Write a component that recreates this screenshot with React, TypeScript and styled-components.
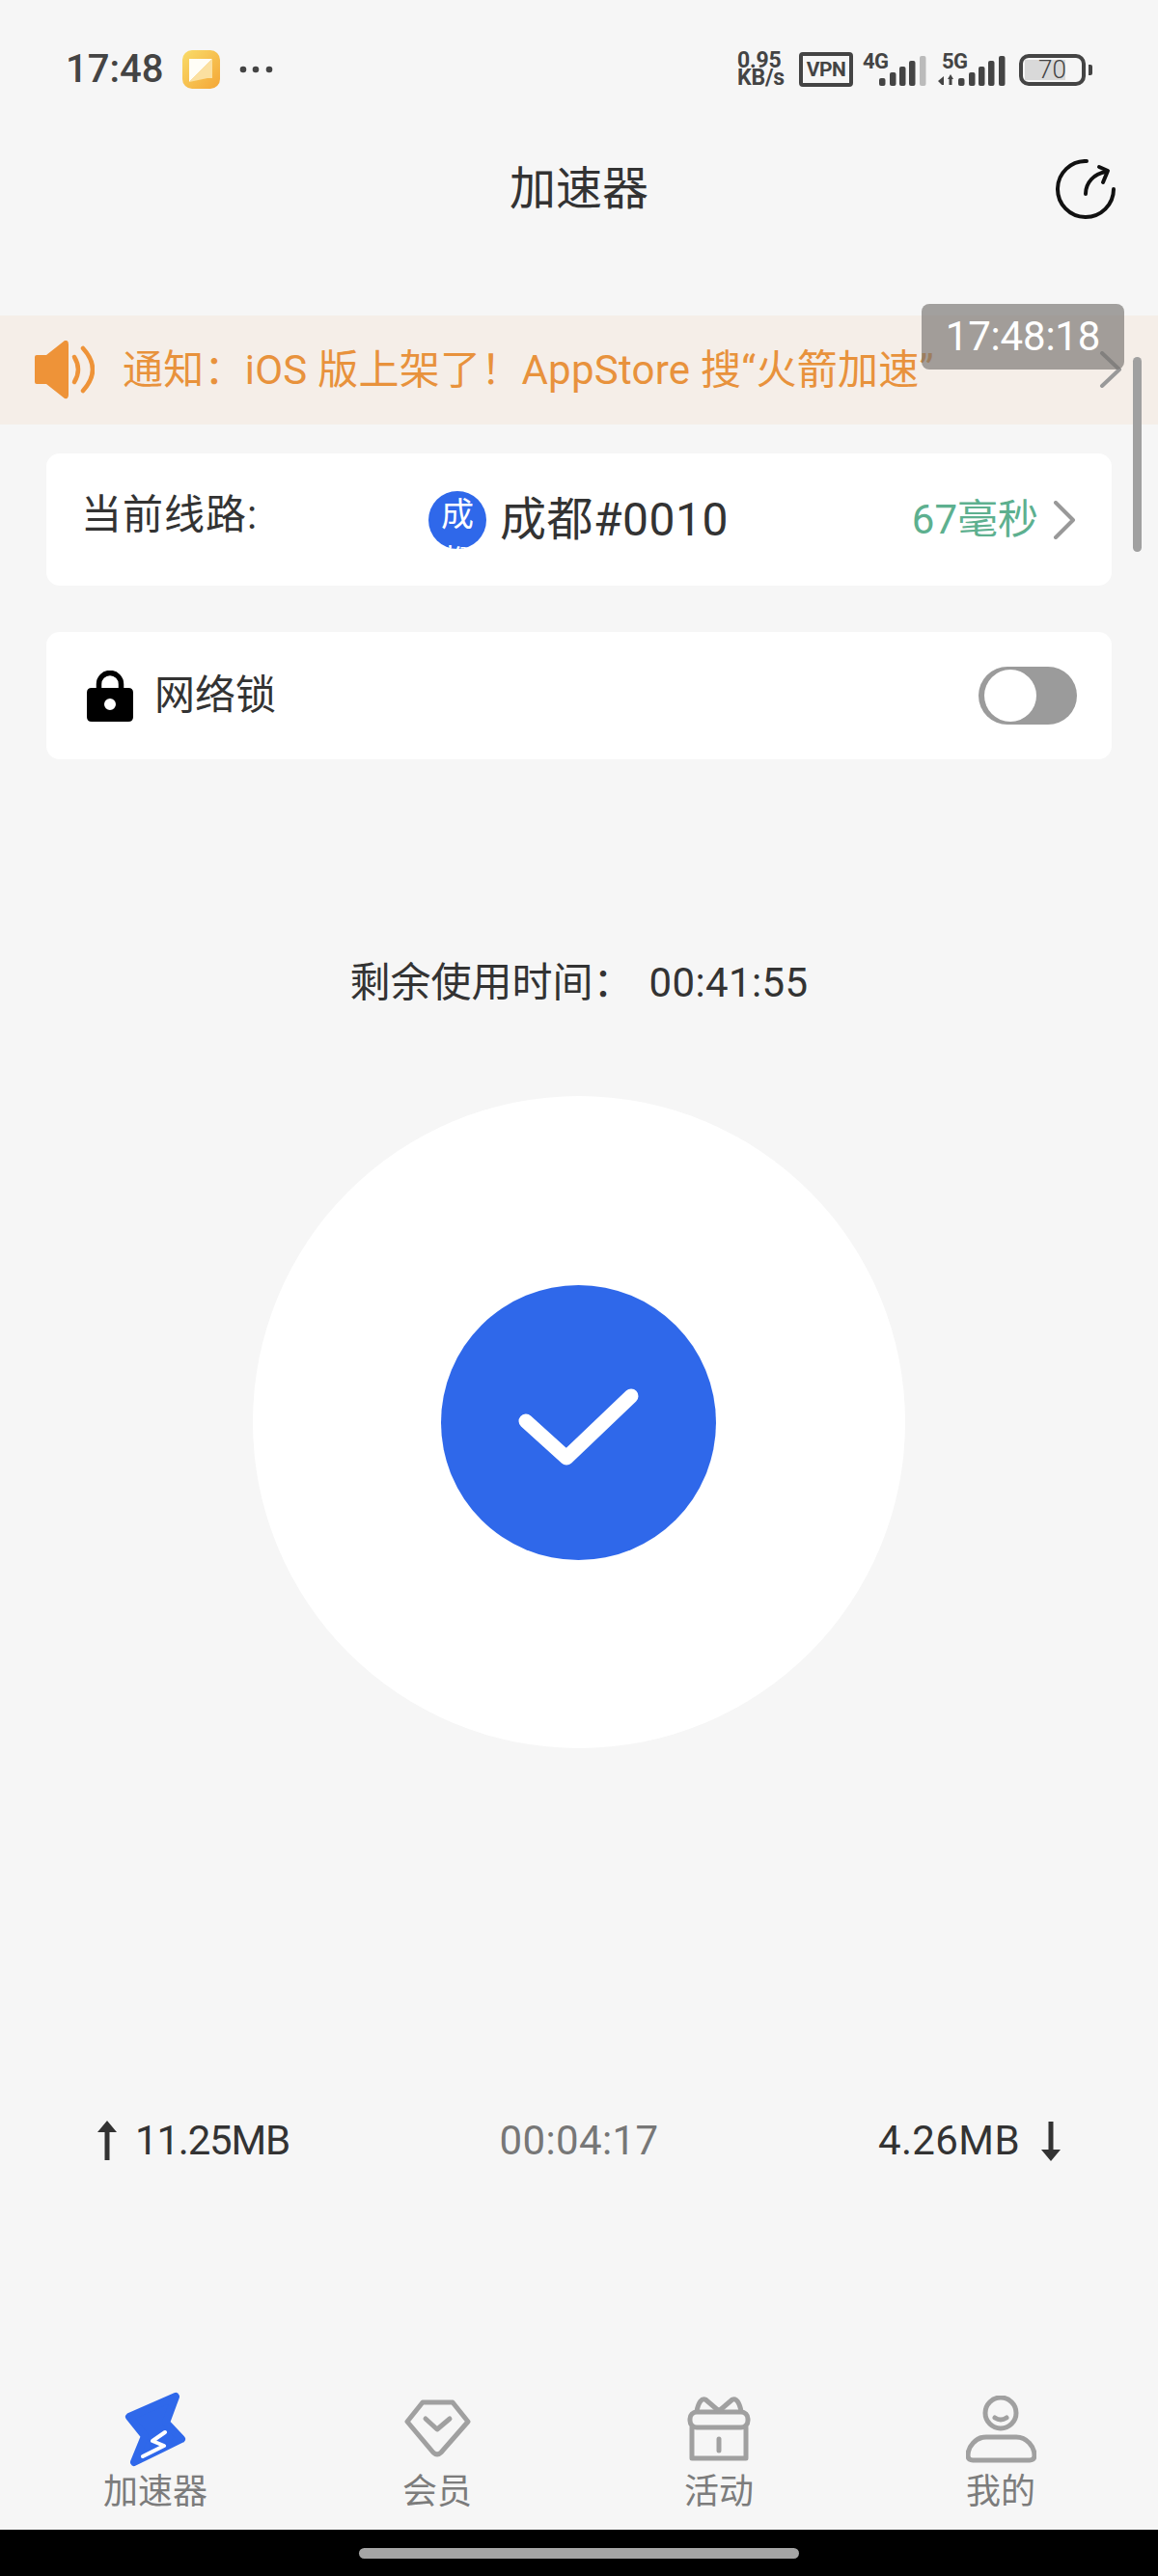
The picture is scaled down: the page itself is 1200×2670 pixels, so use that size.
import React from "react";
import styled, { createGlobalStyle } from "styled-components";

const Global = createGlobalStyle`
  html, body { margin: 0; padding: 0; background: #f6f6f6; }
  * { box-sizing: border-box; }
`;

const FONT = `Roboto, "Noto Sans CJK SC", sans-serif`;

const Page = styled.div`
  position: relative;
  width: 1200px;
  height: 2670px;
  overflow: hidden;
  display: flex;
  flex-direction: column;
  background: #f6f6f6;
  color: #333;
  font-family: ${FONT};
`;

const StatusBar = styled.div`
  height: 144px;
  display: flex;
  align-items: center;
  justify-content: space-between;
  padding: 0 68px;
  color: #444;
`;
const StatusLeft = styled.div`
  display: flex;
  align-items: center;
`;
const Clock = styled.span`
  font-size: 40px;
  font-weight: 500;
  line-height: 44px;
  width: 121px;
`;
const AppIcon = styled.svg`
  display: block;
  width: 40px;
  height: 40px;
  margin-right: 19px;
`;
const Dots = styled.svg`
  display: block;
  width: 36px;
  height: 8px;
`;
const StatusRight = styled.div`
  display: flex;
  align-items: center;
  margin-right: -4px;
  margin-left: auto;
  transform: translateX(-4px);
`;
const Speed = styled.div`
  width: 64px;
  font-size: 23px;
  font-weight: 700;
  line-height: 18px;
  letter-spacing: -0.2px;
  color: #444;
  display: flex;
  flex-direction: column;
`;
const VpnBox = styled.div`
  width: 56px;
  height: 36px;
  border: 4px solid #444;
  border-radius: 4px;
  display: flex;
  align-items: center;
  justify-content: center;
  font-size: 21px;
  font-weight: 700;
  letter-spacing: -0.5px;
  margin-right: 10px;
`;
const Signal = styled.div<{ $w: number }>`
  position: relative;
  width: ${(p) => p.$w}px;
  height: 36px;
`;
const SignalLabel = styled.span<{ $left: number }>`
  position: absolute;
  left: ${(p) => p.$left}px;
  top: -1px;
  font-size: 22px;
  font-weight: 700;
  line-height: 22px;
  letter-spacing: -0.5px;
`;
const SignalBars = styled.svg`
  display: block;
  width: 100%;
  height: 36px;
`;
const Battery = styled.div`
  width: 69px;
  height: 33px;
  border: 4px solid #444;
  border-radius: 10px;
  position: relative;
  display: flex;
  align-items: center;
  justify-content: center;
  font-size: 26px;
  font-weight: 300;
  line-height: 26px;
  overflow: hidden;
  &::before {
    content: "";
    position: absolute;
    left: 2px;
    top: 2px;
    bottom: 2px;
    width: 42px;
    background: #d9d9d9;
  }
`;
const BatteryValue = styled.span`
  position: relative;
`;
const BatteryCap = styled.div`
  width: 4px;
  height: 11px;
  margin-left: 3px;
  background: #444;
  border-radius: 0 2px 2px 0;
`;

const Header = styled.header`
  height: 104px;
  margin-bottom: 79px;
  display: grid;
  grid-template-columns: 1fr auto 1fr;
  align-items: center;
  padding: 0 44px;
`;
const Title = styled.h1`
  grid-column: 2;
  margin: 0;
  font-size: 48px;
  font-weight: 400;
  line-height: 64px;
  color: #333;
`;
const RefreshIcon = styled.svg`
  justify-self: end;
  display: block;
  width: 62px;
  height: 62px;
`;

const Notice = styled.div`
  position: relative;
  height: 113px;
  flex: none;
  background: #f5eee8;
  display: flex;
  align-items: center;
  padding-left: 36px;
  color: #e8923c;
`;
const Speaker = styled.svg`
  display: block;
  width: 62px;
  height: 62px;
  margin-right: 29px;
  flex: none;
`;
const NoticeText = styled.span`
  font-size: 42px;
  line-height: 56px;
  letter-spacing: 0.25px;
  white-space: nowrap;
`;
const NoticeChevron = styled.svg`
  position: absolute;
  left: 1139px;
  top: 37px;
  width: 24px;
  height: 38px;
`;
const TimeBadge = styled.div`
  position: absolute;
  left: 955px;
  top: -12px;
  width: 210px;
  height: 68px;
  border-radius: 8px;
  background: rgba(118, 116, 112, 0.66);
  color: #fff;
  font-size: 42px;
  font-weight: 400;
  line-height: 68px;
  letter-spacing: -0.2px;
  text-align: center;
`;

const Card = styled.section<{ $height: number; $top: number }>`
  height: ${(p) => p.$height}px;
  margin: ${(p) => p.$top}px 48px 0;
  flex: none;
  background: #fff;
  border-radius: 14px;
  display: flex;
  align-items: center;
`;
const LineCard = styled(Card)`
  padding: 0 37px 0 36px;
`;
const LineLabel = styled.span`
  width: 360px;
  font-size: 42px;
  line-height: 56px;
  letter-spacing: 1px;
  margin-top: -10px;
  color: #333;
`;
const CityBadge = styled.div`
  width: 60px;
  height: 60px;
  flex: none;
  border-radius: 50%;
  overflow: hidden;
  background: #2f68ea;
  color: #fff;
  font-size: 34px;
  line-height: 49px;
  text-align: center;
  padding: 0 13px;
  word-break: break-all;
  margin-right: 14px;
`;
const LineName = styled.span`
  font-size: 48px;
  line-height: 60px;
  letter-spacing: 0.5px;
  color: #333;
  white-space: nowrap;
`;
const Latency = styled.span`
  margin-left: auto;
  font-size: 42px;
  line-height: 56px;
  color: #5db08f;
  white-space: nowrap;
`;
const RowChevron = styled.svg`
  display: block;
  width: 24px;
  height: 40px;
  margin-left: 15px;
`;
const LockCard = styled(Card)`
  padding: 0 36px 0 42px;
`;
const LockIcon = styled.svg`
  display: block;
  width: 48px;
  height: 53px;
  margin-right: 22px;
`;
const LockLabel = styled.span`
  font-size: 42px;
  line-height: 56px;
  color: #333;
`;
const Toggle = styled.div`
  width: 102px;
  height: 60px;
  margin-left: auto;
  border-radius: 30px;
  background: #9b9b9b;
  padding: 3px 6px;
  &::after {
    content: "";
    display: block;
    width: 54px;
    height: 54px;
    border-radius: 50%;
    background: #fff;
  }
`;

const Remaining = styled.div`
  margin-top: 206px;
  height: 52px;
  flex: none;
  display: flex;
  justify-content: center;
  align-items: center;
  font-size: 42px;
  line-height: 52px;
  color: #333;
  white-space: nowrap;
`;
const RemainingTime = styled.span`
  margin-left: 16px;
  letter-spacing: 0.4px;
`;

const BigCircle = styled.div`
  width: 676px;
  height: 676px;
  flex: none;
  margin: 91px auto 0;
  border-radius: 50%;
  background: #fff;
  display: flex;
  align-items: center;
  justify-content: center;
`;
const ConnectButton = styled.div`
  width: 285px;
  height: 285px;
  margin-right: 2px;
  border-radius: 50%;
  background: #2f68ea;
`;
const CheckIcon = styled.svg`
  display: block;
  width: 285px;
  height: 285px;
`;

const Stats = styled.div`
  margin-top: 377px;
  height: 60px;
  flex: none;
  padding: 0 100px;
  display: grid;
  grid-template-columns: 1fr auto 1fr;
  align-items: center;
`;
const Traffic = styled.div<{ $end?: boolean }>`
  display: flex;
  align-items: center;
  justify-content: ${(p) => (p.$end ? "flex-end" : "flex-start")};
  gap: ${(p) => (p.$end ? "21px" : "18px")};
  font-size: 42px;
  letter-spacing: ${(p) => (p.$end ? "0.4px" : "-1.2px")};
  line-height: 60px;
  color: #333;
`;
const Elapsed = styled.span`
  font-size: 42px;
  letter-spacing: 0.4px;
  line-height: 60px;
  color: #777;
`;
const TrafficArrow = styled.svg`
  display: block;
  width: 22px;
  height: 42px;
`;

const Tabs = styled.nav`
  margin-top: auto;
  flex: none;
  display: grid;
  grid-template-columns: repeat(4, 292px);
  padding: 0 0 19px 15px;
`;
const Tab = styled.div`
  display: flex;
  flex-direction: column;
  align-items: center;
`;
const TabIconSlot = styled.div`
  height: 86px;
  display: flex;
  align-items: flex-end;
  justify-content: center;
`;
const TabLogo = styled.svg`
  display: block;
  width: 64px;
  height: 78px;
  margin-bottom: 6px;
`;
const TabIcon = styled.svg<{ $w: number; $h: number; $drop: number }>`
  display: block;
  width: ${(p) => p.$w}px;
  height: ${(p) => p.$h}px;
  margin-bottom: ${(p) => p.$drop}px;
  fill: none;
  stroke: #a0a0a0;
  stroke-width: 5;
  stroke-linecap: round;
  stroke-linejoin: round;
`;
const TabLabel = styled.span`
  font-size: 36px;
  line-height: 40px;
  color: #7c7c7c;
`;

const SystemBar = styled.div`
  height: 48px;
  flex: none;
  background: #000;
  display: flex;
  justify-content: center;
  padding-top: 19px;
`;
const HomeIndicator = styled.div`
  width: 456px;
  height: 11px;
  border-radius: 6px;
  background: #a5a5a5;
`;
const ScrollThumb = styled.div`
  position: absolute;
  left: 1174px;
  top: 370px;
  width: 9px;
  height: 202px;
  border-radius: 5px;
  background: #a0a0a0;
`;

const bars = (xs: number[], tops: number[], last?: string) =>
  xs.map((x, i) => (
    <rect
      key={x}
      x={x}
      y={tops[i]}
      width={6.5}
      height={35 - tops[i]}
      rx={2}
      fill={last && i === xs.length - 1 ? last : "#444"}
    />
  ));

export default function App() {
  return (
    <Page>
      <Global />
      <StatusBar>
        <StatusLeft>
          <Clock>17:48</Clock>
          <AppIcon viewBox="0 0 40 40">
            <defs>
              <linearGradient id="appGrad" x1="0" y1="0" x2="1" y2="1">
                <stop offset="0" stopColor="#f9dc6a" />
                <stop offset="1" stopColor="#f4a636" />
              </linearGradient>
            </defs>
            <rect width="39" height="40" rx="10" fill="url(#appGrad)" />
            <polygon points="7,9 31,9 7,33" fill="#fffdf6" />
            <polygon points="31,9 31,29 26,29 7,33" fill="#fbe0a0" />
          </AppIcon>
          <Dots viewBox="0 0 36 8">
            <circle cx="4" cy="4" r="3.3" fill="#444" />
            <circle cx="17" cy="4" r="3.3" fill="#444" />
            <circle cx="31" cy="4" r="3.3" fill="#444" />
          </Dots>
        </StatusLeft>
        <StatusRight>
          <Speed>
            <span>0.95</span>
            <span>KB/s</span>
          </Speed>
          <VpnBox>VPN</VpnBox>
          <Signal $w={78}>
            <SignalLabel $left={0}>4G</SignalLabel>
            <SignalBars viewBox="0 0 78 36">
              {bars([17, 28, 38, 48, 59], [27, 21, 15, 9, 4], "#bbb")}
            </SignalBars>
          </Signal>
          <Signal $w={84}>
            <SignalLabel $left={4}>5G</SignalLabel>
            <SignalBars viewBox="0 0 84 36">
              <path d="M0 30 L6 25 V34 H4 Z" fill="#444" />
              <path d="M10 28 L13 23 L16 28 H14.5 V34 H11.5 V28 Z" fill="#444" />
              {bars([21, 32, 42, 52, 63], [27, 21, 15, 9, 4])}
            </SignalBars>
          </Signal>
          <Battery>
            <BatteryValue>70</BatteryValue>
          </Battery>
          <BatteryCap />
        </StatusRight>
      </StatusBar>

      <Header>
        <Title>加速器</Title>
        <RefreshIcon viewBox="0 0 62 62" fill="none" stroke="#111" strokeWidth="4" strokeLinecap="round" strokeLinejoin="round">
          <path d="M32 2 A29 29 0 1 0 60 31" />
          <path d="M31 36 C31 24 40 15 52 13" />
          <polyline points="45,8 54,12 49,24" />
        </RefreshIcon>
      </Header>

      <Notice>
        <Speaker viewBox="0 0 62 62">
          <path
            d="M2 15 H12 L31 0 Q35 -1 35 4 V56 Q35 61 31 60 L12 45 H2 Q0 45 0 43 V17 Q0 15 2 15Z"
            fill="#ee9338"
          />
          <path d="M41 17 Q49 30 41 43" fill="none" stroke="#ee9338" strokeWidth="4.5" strokeLinecap="round" />
          <path d="M50 8 Q70 30 50 52" fill="none" stroke="#ee9338" strokeWidth="4.5" strokeLinecap="round" />
        </Speaker>
        <NoticeText>通知：iOS 版上架了！AppStore 搜“火箭加速”</NoticeText>
        <NoticeChevron viewBox="0 0 24 38" fill="none" stroke="#999" strokeWidth="4" strokeLinecap="round" strokeLinejoin="round">
          <polyline points="3,2 21,19 3,36" />
        </NoticeChevron>
        <TimeBadge>17:48:18</TimeBadge>
      </Notice>

      <LineCard $height={137} $top={30}>
        <LineLabel>当前线路:</LineLabel>
        <CityBadge>成都</CityBadge>
        <LineName>成都#0010</LineName>
        <Latency>67毫秒</Latency>
        <RowChevron viewBox="0 0 24 40" fill="none" stroke="#999" strokeWidth="4" strokeLinecap="round" strokeLinejoin="round">
          <polyline points="3,2 21,20 3,38" />
        </RowChevron>
      </LineCard>

      <LockCard $height={132} $top={48}>
        <LockIcon viewBox="0 0 48 53">
          <path d="M12.5 20 V14 A11.5 11.5 0 0 1 35.5 14 V20" fill="none" stroke="#000" strokeWidth="5.5" />
          <path
            d="M5 18 H43 Q48 18 48 23 V48 Q48 53 43 53 H5 Q0 53 0 48 V23 Q0 18 5 18Z M24 29 A6 6 0 1 0 24 41 A6 6 0 1 0 24 29Z"
            fill="#000"
            fillRule="evenodd"
          />
        </LockIcon>
        <LockLabel>网络锁</LockLabel>
        <Toggle />
      </LockCard>

      <Remaining>
        剩余使用时间：
        <RemainingTime>00:41:55</RemainingTime>
      </Remaining>

      <BigCircle>
        <ConnectButton>
          <CheckIcon viewBox="0 0 285 285" fill="none" stroke="#fff" strokeWidth="15" strokeLinecap="round" strokeLinejoin="round">
            <polyline points="88,141 130,179 197,115" />
          </CheckIcon>
        </ConnectButton>
      </BigCircle>

      <Stats>
        <Traffic>
          <TrafficArrow viewBox="0 0 22 42">
            <path d="M11 0 L21 12 H13.5 V41 H8.5 V12 H1 Z" fill="#333" />
          </TrafficArrow>
          11.25MB
        </Traffic>
        <Elapsed>00:04:17</Elapsed>
        <Traffic $end>
          4.26MB
          <TrafficArrow viewBox="0 0 22 42">
            <path d="M11 42 L21 30 H13.5 V1 H8.5 V30 H1 Z" fill="#333" />
          </TrafficArrow>
        </Traffic>
      </Stats>

      <Tabs>
        <Tab>
          <TabIconSlot>
            <TabLogo viewBox="0 0 64 78">
              <polygon points="53,5 43,32 59,49 10,73 21,46 5,26" fill="#2f68ea" stroke="#2f68ea" strokeWidth="8" strokeLinejoin="round" />
              <polyline points="19,67 41,56 29,51 42,42" fill="none" stroke="#fff" strokeWidth="4" strokeLinecap="round" strokeLinejoin="round" />
            </TabLogo>
          </TabIconSlot>
          <TabLabel>加速器</TabLabel>
        </Tab>
        <Tab>
          <TabIconSlot>
            <TabIcon $w={69} $h={60} $drop={16} viewBox="0 0 69 60">
              <path d="M19 3 H50 L66 23 L38 55 Q34 59 30 55 L3 23 Z" />
              <polyline points="22,20 34,31 47,20" />
            </TabIcon>
          </TabIconSlot>
          <TabLabel>会员</TabLabel>
        </Tab>
        <Tab>
          <TabIconSlot>
            <TabIcon $w={66} $h={67} $drop={12} viewBox="0 0 66 67">
              <rect x="3" y="16" width="60" height="16" rx="7" />
              <path d="M5 32 V64 H61 V32" />
              <path d="M33 44 V56" />
              <path d="M10 15 Q13 1 19 3 L33 15 L47 3 Q53 1 56 15" />
            </TabIcon>
          </TabIconSlot>
          <TabLabel>活动</TabLabel>
        </Tab>
        <Tab>
          <TabIconSlot>
            <TabIcon $w={73} $h={70} $drop={10} viewBox="0 0 73 70">
              <circle cx="36" cy="18" r="16" />
              <path d="M30 23 Q36 27 42 23" />
              <path d="M21 43 H52 C63 43 71 53 71 62 Q71 67 66 67 H7 Q2 67 2 62 C2 53 10 43 21 43Z" />
            </TabIcon>
          </TabIconSlot>
          <TabLabel>我的</TabLabel>
        </Tab>
      </Tabs>

      <SystemBar>
        <HomeIndicator />
      </SystemBar>
      <ScrollThumb />
    </Page>
  );
}
